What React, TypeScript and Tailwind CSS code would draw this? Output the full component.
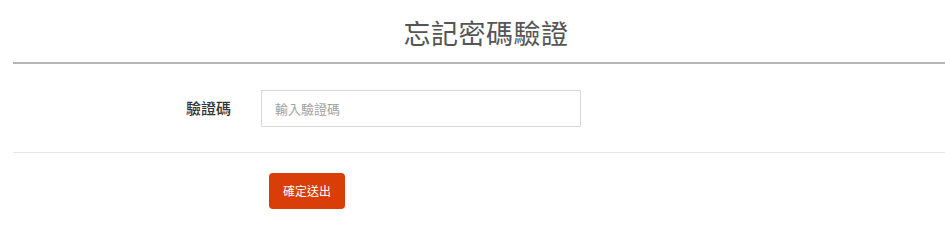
import React from 'react';

const font = { fontFamily: '"Noto Sans CJK TC", "Noto Sans", sans-serif' };

export default function App() {
    return (
        <div className="w-[945px] h-[251px] bg-white pl-[13px]" style={font}>
            {/* Title */}
            <div className="h-[64px] flex items-center justify-center border-b-2 border-[#b5b5b5]">
                <h1 className="text-[27px] text-[#555555] tracking-[0.5px] ml-[14px] mt-[4px]">忘記密碼驗證</h1>
            </div>

            {/* Verification code field */}
            <div className="flex items-center pt-[26px] pb-[25px] border-b border-[#e6e6e6]">
                <label className="w-[218px] text-right text-[15px] font-medium text-[#333333]">驗證碼</label>
                <input
                    type="text"
                    placeholder="輸入驗證碼"
                    className="ml-[30px] w-[320px] h-[37px] border border-[#d9d9d9] px-[13px] text-[13px] text-[#333333] placeholder:text-[#a0a0a0] outline-none"
                />
            </div>

            {/* Submit */}
            <div className="pt-[20px] pl-[256px]">
                <button className="w-[76px] h-[36px] rounded-[4px] bg-[#d93d08] text-white text-[12px]">
                    確定送出
                </button>
            </div>
        </div>
    );
}
